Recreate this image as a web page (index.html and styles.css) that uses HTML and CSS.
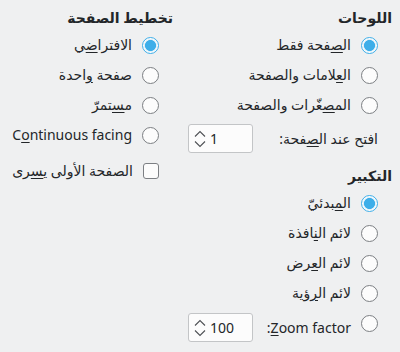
FILE: index.html
```html
<!DOCTYPE html>
<html lang="ar" dir="rtl">
<head>
<meta charset="utf-8">
<link rel="stylesheet" href="styles.css">
</head>
<body>
<div class="page">
  <div class="col col-right">
    <div class="heading">اللوحات</div>
    <div class="row"><span class="radio checked"></span><span class="label">ال<u>ص</u>فحة فقط</span></div>
    <div class="row"><span class="radio"></span><span class="label">ال<u>ع</u>لامات والصفحة</span></div>
    <div class="row"><span class="radio"></span><span class="label">الم<u>ص</u>غّرات والصفحة</span></div>
    <div class="spin-row">
      <span class="label indent">افتح عند ال<u>ص</u>فحة:</span>
      <div class="spinbox"><svg class="chev" width="12" height="18" viewBox="0 0 12 18"><path d="M1 6.5 L6 1.5 L11 6.5 M1 11.5 L6 16.5 L11 11.5" fill="none" stroke="#4d5054" stroke-width="1.1"/></svg><span class="num">1</span></div>
    </div>
    <div class="heading heading2">التكبير</div>
    <div class="row"><span class="radio checked"></span><span class="label">ال<u>م</u>بدئيّ</span></div>
    <div class="row"><span class="radio"></span><span class="label">لائم ال<u>ن</u>افذة</span></div>
    <div class="row"><span class="radio"></span><span class="label">لائم ال<u>ع</u>رض</span></div>
    <div class="row"><span class="radio"></span><span class="label">لائم ال<u>ر</u>ؤية</span></div>
    <div class="spin-row zoom-row">
      <div class="zoom-opt"><span class="radio top"></span><span class="label"><u>Z</u>oom factor:</span></div>
      <div class="spinbox"><svg class="chev" width="12" height="18" viewBox="0 0 12 18"><path d="M1 6.5 L6 1.5 L11 6.5 M1 11.5 L6 16.5 L11 11.5" fill="none" stroke="#4d5054" stroke-width="1.1"/></svg><span class="num">100</span></div>
    </div>
  </div>
  <div class="col col-left">
    <div class="heading">تخطيط الصفحة</div>
    <div class="row"><span class="radio checked"></span><span class="label">الافترا<u>ض</u>ي</span></div>
    <div class="row"><span class="radio"></span><span class="label">صفحة <u>و</u>احدة</span></div>
    <div class="row"><span class="radio"></span><span class="label">م<u>س</u>تمرّ</span></div>
    <div class="row"><span class="radio"></span><span class="label"><bdi dir="ltr">C<u>o</u>ntinuous facing</bdi></span></div>
    <div class="row check-row"><span class="checkbox"></span><span class="label">الصفحة الأولى ي<u>س</u>رى</span></div>
  </div>
</div>
</body>
</html>
```

FILE: styles.css
```css
html, body {
  margin: 0;
  padding: 0;
  background: #eff0f1;
}
body {
  font-family: "Noto Sans", "DejaVu Sans", sans-serif;
  font-size: 14px;
  color: #232629;
  width: 400px;
  height: 352px;
  overflow: hidden;
}
.page {
  display: grid;
  grid-template-columns: 204px 165px;
  column-gap: 15px;
  padding: 6px 8px 0 8px;
}
.col {
  display: flex;
  flex-direction: column;
}
.heading {
  height: 24px;
  line-height: 24px;
  font-weight: bold;
}
.heading2 {
  margin-top: 11px;
}
.row {
  height: 30px;
  display: flex;
  align-items: center;
  gap: 10px;
  padding-right: 14px;
}
.label {
  white-space: nowrap;
  line-height: 18px;
}
.label u {
  text-decoration-thickness: 1px;
  text-underline-offset: 2px;
}
.radio {
  width: 17px;
  height: 17px;
  box-sizing: border-box;
  border: 1px solid #7c7f83;
  border-radius: 50%;
  background: #fcfcfc;
  flex: none;
}
.radio.checked {
  border-color: #3daee9;
  background: radial-gradient(circle, #3daee9 0, #3daee9 5.2px, #d6ecf8 5.8px, #fcfcfc 6.8px);
}
.checkbox {
  width: 16px;
  height: 16px;
  box-sizing: border-box;
  border: 1px solid #7c7f83;
  border-radius: 3px;
  background: #fcfcfc;
  flex: none;
}
.check-row {
  margin-top: 6px;
}
.spin-row {
  display: flex;
  align-items: center;
  justify-content: space-between;
  height: 29px;
  margin-top: 4px;
}
.indent {
  padding-right: 14px;
}
.spinbox {
  direction: ltr;
  width: 65px;
  height: 29px;
  box-sizing: border-box;
  border: 1px solid #c3c5c7;
  border-radius: 3px;
  background: #fcfcfc;
  display: flex;
  align-items: center;
  padding-left: 5px;
  gap: 4px;
}
.chev {
  display: block;
}
.num {
  font-size: 14px;
}
.zoom-row {
  margin-top: 5px;
  align-items: flex-start;
}
.zoom-opt {
  display: flex;
  align-items: center;
  gap: 10px;
  padding-right: 14px;
  height: 29px;
}
.zoom-opt .radio.top {
  align-self: flex-start;
  margin-top: 2px;
}
```
